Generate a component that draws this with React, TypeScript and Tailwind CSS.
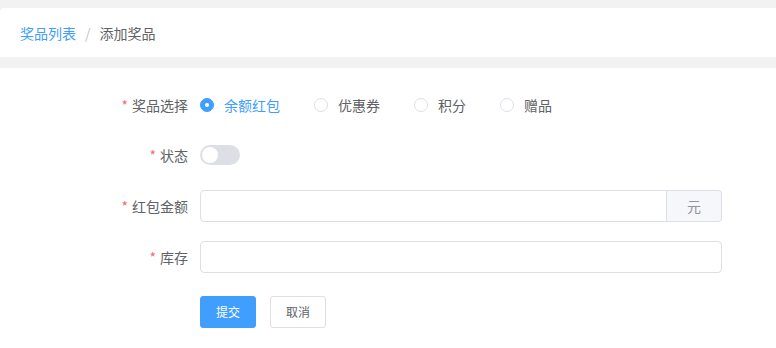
import React, { useState } from 'react'

const font = { fontFamily: '"Noto Sans CJK SC", "Noto Sans", sans-serif' }

const Label = ({ text }: { text: string }) => (
  <label className="w-[200px] shrink-0 pr-[12px] text-right text-sm text-[#606266] leading-[32px]">
    <span className="mr-[4px] text-[#f56c6c]">*</span>
    {text}
  </label>
)

const App = () => {
  const [prize, setPrize] = useState('余额红包')
  const [status, setStatus] = useState(false)
  const options = ['余额红包', '优惠券', '积分', '赠品']

  return (
    <div className="w-full h-[348px] bg-[#f2f2f2] pt-[8px] overflow-hidden" style={font}>
      {/* breadcrumb */}
      <div className="h-[49px] bg-white rounded-tl-[4px] flex items-center px-[20px] text-sm">
        <span className="text-[#409eff] cursor-pointer">奖品列表</span>
        <span className="mx-[9px] text-[#c0c4cc]">/</span>
        <span className="text-[#606266]">添加奖品</span>
      </div>

      <div className="mt-[11px] bg-white h-full pt-[21px]">
        {/* 奖品选择 */}
        <div className="flex items-center h-[32px] mb-[18px]">
          <Label text="奖品选择" />
          <div className="flex items-center">
            {options.map((o) => {
              const active = prize === o
              return (
                <div
                  key={o}
                  className="flex items-center mr-[34px] cursor-pointer"
                  onClick={() => setPrize(o)}
                >
                  {active ? (
                    <span className="w-[14px] h-[14px] rounded-full bg-[#409eff] border border-[#409eff] flex items-center justify-center">
                      <span className="w-[4px] h-[4px] rounded-full bg-white" />
                    </span>
                  ) : (
                    <span className="w-[14px] h-[14px] rounded-full bg-white border border-[#dcdfe6]" />
                  )}
                  <span
                    className={
                      'pl-[10px] text-sm ' +
                      (active ? 'text-[#409eff]' : 'text-[#606266]')
                    }
                  >
                    {o}
                  </span>
                </div>
              )
            })}
          </div>
        </div>

        {/* 状态 */}
        <div className="flex items-center h-[32px] mb-[19px]">
          <Label text="状态" />
          <button
            className={
              'relative w-[40px] h-[20px] rounded-full transition-colors ' +
              (status ? 'bg-[#409eff]' : 'bg-[#dcdfe6]')
            }
            onClick={() => setStatus(!status)}
          >
            <span
              className={
                'absolute top-[2px] w-[16px] h-[16px] rounded-full bg-white transition-all ' +
                (status ? 'left-[22px]' : 'left-[2px]')
              }
            />
          </button>
        </div>

        {/* 红包金额 */}
        <div className="flex items-center h-[32px] mb-[19px]">
          <Label text="红包金额" />
          <div className="flex w-[522px] h-[32px]">
            <input className="flex-1 min-w-0 h-full border border-[#dcdfe6] rounded-l-[4px] px-[15px] text-sm text-[#606266] outline-none" />
            <div className="w-[55px] h-full flex items-center justify-center bg-[#f5f7fa] border border-l-0 border-[#dcdfe6] rounded-r-[4px] text-sm text-[#909399]">
              元
            </div>
          </div>
        </div>

        {/* 库存 */}
        <div className="flex items-center h-[32px] mb-[23px]">
          <Label text="库存" />
          <input className="w-[522px] h-[32px] border border-[#dcdfe6] rounded-[4px] px-[15px] text-sm text-[#606266] outline-none" />
        </div>

        {/* buttons */}
        <div className="flex items-center h-[32px] pl-[200px]">
          <button className="w-[56px] h-[32px] rounded-[3px] bg-[#409eff] border border-[#409eff] text-xs text-white">
            提交
          </button>
          <button className="ml-[14px] w-[56px] h-[32px] rounded-[3px] bg-white border border-[#dcdfe6] text-xs text-[#606266]">
            取消
          </button>
        </div>
      </div>
    </div>
  )
}

export default App
